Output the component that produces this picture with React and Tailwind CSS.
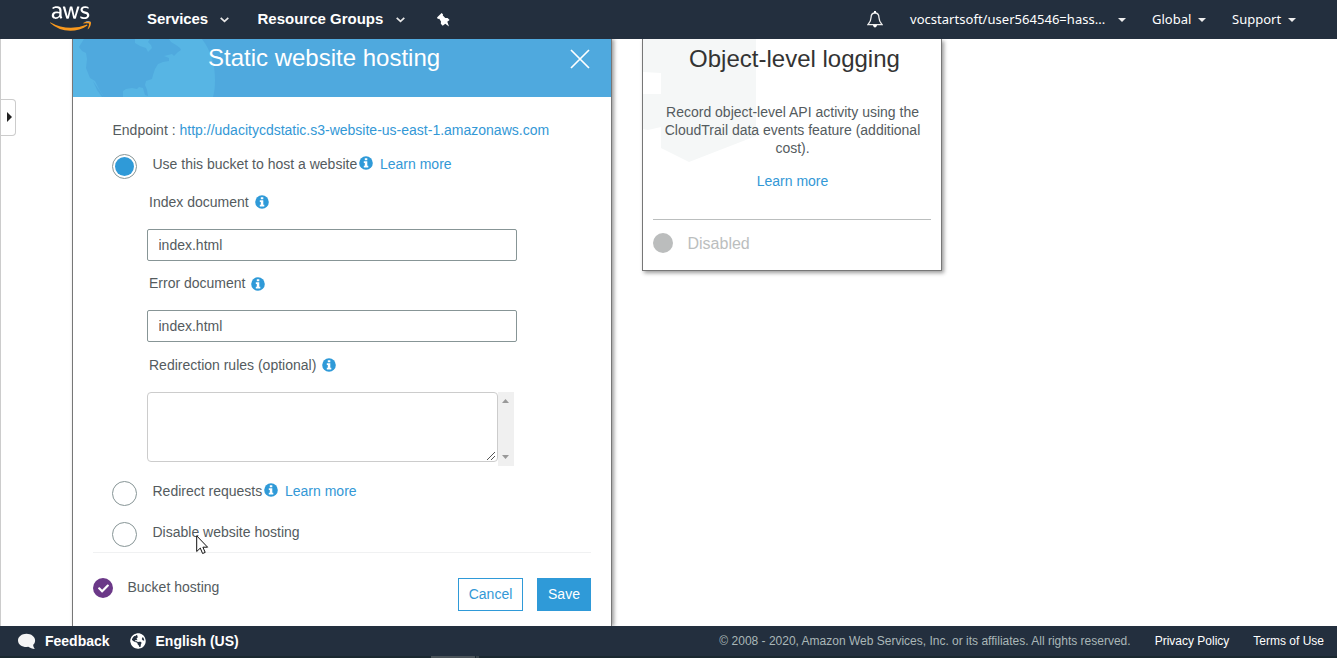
import { FaAws, FaCheck, FaGlobeAmericas } from "react-icons/fa";

function Info({ className = "" }) {
  return (
    <svg width="14" height="14" viewBox="0 0 14 14" className={"shrink-0 " + className}>
      <circle cx="7" cy="7" r="6.8" fill="#2f9ad8" />
      <path d="M5.8 2.2H8.3V4.2H5.8ZM4.8 5.3H8.3V9.8H9.3V11.4H4.8V9.8H5.8V6.9H4.8Z" fill="#fff" />
    </svg>
  );
}

function Chevron() {
  return (
    <svg width="9" height="6" viewBox="0 0 9 6" className="mt-px shrink-0">
      <path d="M0.7 0.8 4.5 4.3 8.3 0.8" fill="none" stroke="#e8e8e8" strokeWidth="1.7" />
    </svg>
  );
}

function Caret() {
  return (
    <svg width="8" height="4" viewBox="0 0 8 4" className="shrink-0">
      <path d="M0 0H8L4 4Z" fill="#eee" />
    </svg>
  );
}

function Radio({ checked }) {
  return (
    <span className="flex h-[25px] w-[25px] shrink-0 items-center justify-center rounded-full border border-[#879596] bg-white">
      {checked && <span className="h-[19px] w-[19px] rounded-full bg-[#2f9ad8]" />}
    </span>
  );
}

function Header() {
  return (
    <header className="flex h-[39px] shrink-0 items-center bg-[#232f3e] text-white">
      <svg width="0" height="0" className="absolute">
        <linearGradient id="aws-fill" gradientUnits="userSpaceOnUse" x1="0" y1="0" x2="0" y2="512">
          <stop offset="0.61" stopColor="#fff" />
          <stop offset="0.61" stopColor="#f8981d" />
        </linearGradient>
      </svg>
      <FaAws className="mb-[2px] ml-[50px] h-[33px] w-[41px] shrink-0" style={{ fill: "url(#aws-fill)" }} />
      <div className="ml-14 flex w-[82px] items-center justify-between text-[15px] font-bold">
        <span className="whitespace-nowrap tracking-[-0.1px]">Services</span>
        <Chevron />
      </div>
      <div className="ml-[29px] flex w-[147px] items-center justify-between text-[15px] font-bold">
        <span className="-ml-[0.5px] whitespace-nowrap">Resource Groups</span>
        <Chevron />
      </div>
      <svg width="13" height="14" viewBox="0 0 13 14" className="ml-8">
        <path d="M4.6 0 6 1.2 5.8 2.5 8.3 5 10.6 4.9 12.6 7 10.3 8.7 12 13.4 8.3 10.7 5.7 12.8 3.8 10.7 4 8.4 2.2 5.8 0.9 6 0 4.6Z" fill="#fff" />
      </svg>
      <div className="ml-auto flex items-center text-[13px] [font-family:'Noto_Sans','Open_Sans',sans-serif]">
        <svg width="16" height="17" viewBox="0 0 16 17" className="mr-[27px]">
          <path d="M8 2C5.2 2 4.1 3.8 4.1 6.3 4.1 10 3 11.4 0.9 13.7H15.1C13 11.4 11.9 10 11.9 6.3 11.9 3.8 10.8 2 8 2Z" fill="none" stroke="#eee" strokeWidth="1.3" />
          <path d="M7 0H9V2H7ZM6 14H10C9.8 17.2 6.2 17.2 6 14Z" fill="#fff" />
        </svg>
        <span className="w-[208px] whitespace-nowrap tracking-[0.03px]">vocstartsoft/user564546=hass...</span>
        <Caret />
        <span className="ml-[26px] w-[46px]">Global</span>
        <Caret />
        <span className="ml-[26px] w-[56px]">Support</span>
        <Caret />
        <span className="w-[41px]" />
      </div>
    </header>
  );
}

function HostingPanel() {
  return (
    <section className="ml-[71px] flex w-[540px] shrink-0 flex-col border-x border-[#777] bg-white shadow-[2px_0_4px_rgba(0,0,0,0.4)]">
      <div className="relative h-[58px] shrink-0 overflow-hidden bg-[#4fa9de]">
        <svg width="150" height="58" viewBox="0 0 150 58" className="absolute left-0 top-0">
          <path d="M0 0H129C138 12 142 25 142 41C142 47 141.5 53 140 58H0Z" fill="#57b5e4" />
          <path d="M11 0 6 8 9 12 13 14 14 20 13 29 15 34 17 39 22 42 26 50 31 58H50L50 52 53 50 59 49 64 50 66 48 70 49 72 56 75 57 74 51 72 46 73 42 79 40 80 36 82 30 85 25 90 23 96 22 96 19 91 17 99 15 101 17 105 13 108 11 107 9 103 6 98 3 96 0H77L75 3 78 6 79 9 75 13 73 9 67 7 62 4 62 0Z" fill="#4fa9de" />
          <path d="M20 42 31 58H29L24 51Z" fill="#4fa9de" />
        </svg>
        <div className="relative flex pt-[2px] text-white">
          <h2 className="ml-[135px] w-[362px] whitespace-nowrap text-[24px] leading-[34px]">Static website hosting</h2>
          <svg width="20" height="20" viewBox="0 0 20 20" className="mt-2">
            <path d="M1 1 19 19M19 1 1 19" stroke="#fff" strokeWidth="1.7" />
          </svg>
        </div>
      </div>
      <div className="flex h-[455px] shrink-0 flex-col px-5 text-[14px] leading-[18px] text-[#545b5e]">
        <div className="mt-6 flex pl-[19.5px]">
          <span className="w-[67px] whitespace-nowrap">Endpoint :</span>
          <span className="whitespace-nowrap text-[#3398d6]">http://udacitycdstatic.s3-website-us-east-1.amazonaws.com</span>
        </div>
        <div className="mt-[15px] flex h-[25px] pl-[19px]">
          <Radio checked />
          <span className="ml-[15.5px] mt-px w-[206.5px] whitespace-nowrap">Use this bucket to host a website</span>
          <Info className="mt-[2px]" />
          <span className="ml-[7px] mt-px text-[#3398d6]">Learn more</span>
        </div>
        <div className="ml-[54px] flex flex-col">
          <label className="ml-[2px] mt-[14px] flex items-center gap-[6px]">Index document <Info /></label>
          <input readOnly value="index.html" className="mt-[18px] h-8 w-[370px] rounded-[2px] border border-[#879596] px-[10.5px] outline-none" />
          <label className="ml-[2px] mt-[13px] flex items-center gap-[6px]">Error document <Info className="mt-px" /></label>
          <input readOnly value="index.html" className="mt-[18px] h-8 w-[370px] rounded-[2px] border border-[#879596] px-[10.5px] outline-none" />
          <label className="ml-[2px] mt-[14px] flex items-center gap-[6px]">Redirection rules (optional) <Info /></label>
          <div className="mt-[18px] flex h-[74px] w-[367px]">
            <div className="flex h-[70px] w-[351px] shrink-0 items-end justify-end rounded-[4px] border border-[#ccc]">
              <svg width="10" height="10" viewBox="0 0 10 10" className="mr-px">
                <path d="M1 9 9 1M5 9 9 5" stroke="#555" />
              </svg>
            </div>
            <div className="flex flex-1 flex-col items-start justify-between bg-[#f0f0f0] pb-[7px] pl-1 pt-[7px]">
              <svg width="7" height="4" viewBox="0 0 7 4"><path d="M0 4H7L3.5 0Z" fill="#999" /></svg>
              <svg width="7" height="4" viewBox="0 0 7 4"><path d="M0 0H7L3.5 4Z" fill="#999" /></svg>
            </div>
          </div>
        </div>
        <div className="mt-[15px] flex h-[25px] pl-[19px]">
          <Radio />
          <span className="ml-[15.5px] mt-px w-[111.5px] whitespace-nowrap">Redirect requests</span>
          <Info className="mt-[2px]" />
          <span className="ml-[7px] mt-px text-[#3398d6]">Learn more</span>
        </div>
        <div className="relative mt-4 flex h-[25px] pl-[19px]">
          <Radio />
          <span className="ml-[15.5px] mt-px whitespace-nowrap">Disable website hosting</span>
          <svg width="13" height="20" viewBox="0 0 13 20" className="absolute left-[103px] top-[13px]">
            <path d="M.7.8V16.5L4.3 13.1 6.6 18.5 9.2 17.4 6.9 12.2H11.6Z" fill="#fff" stroke="#111" strokeWidth="1" />
          </svg>
        </div>
      </div>
      <div className="mx-5 flex shrink-0 border-t border-[#f0f1f2] pt-[25px] text-[14px]">
        <span className="flex h-5 w-5 items-center justify-center rounded-full bg-[#6b3888]">
          <FaCheck className="h-[11px] w-[11px] text-white" />
        </span>
        <span className="ml-[14.5px] leading-[18px] text-[#545b5e]">Bucket hosting</span>
        <button className="ml-auto h-[33px] w-[65px] border border-[#2f9ad8] text-[#3398d6]">Cancel</button>
        <button className="ml-[14px] h-[33px] w-[54px] bg-[#2f9ad8] text-white">Save</button>
      </div>
    </section>
  );
}

function LoggingCard() {
  return (
    <section className="relative ml-[30px] h-[232px] w-[300px] shrink-0 border border-t-0 border-[#777] bg-white text-center text-[14px] leading-[18px] text-[#545b5e] shadow-[2px_2px_4px_rgba(0,0,0,0.4)]">
      <svg width="115" height="125" viewBox="0 0 115 125" className="absolute left-0 top-0">
        <path d="M0 0H113V97L46 123 18 109V88L5 91 0 90V55H18V34L0 33Z" fill="#f5f7f7" />
      </svg>
      <div className="relative px-[10px]">
        <h2 className="ml-[5px] pt-[3px] text-[24px] leading-[34px] text-[#333]">Object-level logging</h2>
        <p className="ml-px mt-[27px] whitespace-nowrap">Record object-level API activity using the<br />CloudTrail data events feature (additional<br />cost).</p>
        <p className="ml-px mt-[15px] text-[#3398d6]">Learn more</p>
        <div className="mt-[29px] flex items-center border-t border-[#bbbebe] pt-[13px] text-[16px] leading-5 text-[#bbbebe]">
          <span className="mr-[14.5px] h-5 w-5 rounded-full bg-[#bbbdbd]" />
          <span className="h-5 pt-px">Disabled</span>
        </div>
      </div>
    </section>
  );
}

function Footer() {
  return (
    <footer className="flex h-8 shrink-0 flex-col bg-[#232f3e] text-white">
      <div className="flex h-[30px] items-center text-[14px] font-bold">
        <svg width="18" height="17" viewBox="0 0 18 17" className="ml-[18px]">
          <path d="M8.5 0.7C3.8 0.7 0 3.6 0 7.4S3.8 14 8.5 14L10.3 13.8C12 15 14.4 15.9 16.8 15.9 15.9 14.9 15.2 13.5 15.2 11.8 16.4 10.6 17.1 9.1 17.1 7.4 17.1 3.6 13.2 0.7 8.5 0.7Z" fill="#f5f5f5" />
        </svg>
        <span className="ml-[9px] w-[85px]">Feedback</span>
        <FaGlobeAmericas className="h-4 w-4 -rotate-12" />
        <span className="ml-[9.5px]">English (US)</span>
        <div className="ml-auto flex whitespace-nowrap pr-[13px] text-[12px] font-normal">
          <span className="text-[#aab7b8]">© 2008 - 2020, Amazon Web Services, Inc. or its affiliates. All rights reserved.</span>
          <span className="ml-6">Privacy Policy</span>
          <span className="ml-6">Terms of Use</span>
        </div>
      </div>
      <div className="flex h-[2px] bg-[#1a2830]">
        <span className="ml-[431px] w-11 bg-[#4a5359]" />
        <span className="ml-px w-[3px] bg-[#3a444b]" />
      </div>
    </footer>
  );
}

export default function App() {
  return (
    <div className="flex h-[658px] w-[1337px] flex-col overflow-hidden bg-white [font-family:'Liberation_Sans',Arial,sans-serif]">
      <Header />
      <main className="relative flex h-[587px] shrink-0 items-stretch overflow-hidden border-l border-[#ccc]">
        <HostingPanel />
        <div className="flex items-start"><LoggingCard /></div>
        <div className="absolute -left-px top-[60px] flex h-[37px] w-4 items-center justify-end rounded-r-[4px] border border-l-0 border-[#ccc] bg-white pb-px pr-[3px]">
          <svg width="5" height="10" viewBox="0 0 5 10"><path d="M0 0V10L5 5Z" fill="#222" /></svg>
        </div>
      </main>
      <Footer />
    </div>
  );
}
